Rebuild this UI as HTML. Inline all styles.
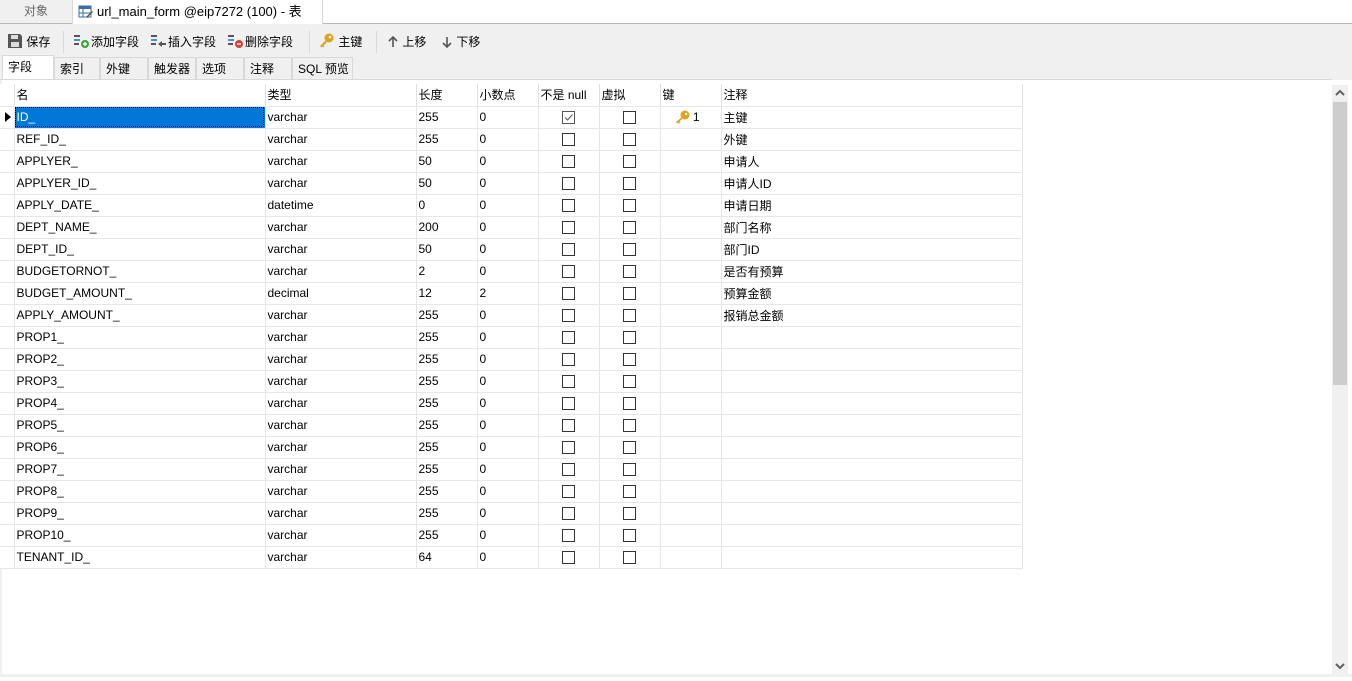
<!DOCTYPE html>
<html><head><meta charset="utf-8">
<style>
*{margin:0;padding:0;box-sizing:border-box}
body{width:1352px;height:681px;overflow:hidden;background:#fff;font-family:"Liberation Sans","Noto Sans CJK SC",sans-serif;font-size:12px;color:#000;position:relative}
.abs{position:absolute}
#top{left:0;top:0;width:1352px;height:24px;background:#fff;border-bottom:1px solid #b8b8b8}
.t1{left:0;top:0;width:72px;height:23px;background:#f0f0f0;color:#666;text-align:center;line-height:23px}
.t2{left:72px;top:0;width:251px;height:24px;background:#fff;border-left:1px solid #d9d9d9;border-right:1px solid #d9d9d9;line-height:23px;padding-left:24px;font-size:13px}
#tb{left:0;top:24px;width:1352px;height:56px;background:#f0f0f0}
.btn{position:absolute;top:33px;height:18px;line-height:18px;font-size:12px}
.sep{position:absolute;top:31px;width:1px;height:22px;background:#d8d8d8}
.stab{position:absolute;top:57px;height:23px;line-height:22px;padding-left:5px;border:1px solid #d9d9d9;border-bottom:none;background:#f0f0f0;font-size:12px}
#grid{position:absolute;left:0;top:79px;width:1332px;height:595px;background:#fff;border-top:1px solid #d9d9d9}
table{position:absolute;left:0;top:84px;border-collapse:collapse;table-layout:fixed}
td{height:22px;border-right:1px solid #e6e6e6;border-bottom:1px solid #e6e6e6;padding-left:2px;white-space:nowrap;overflow:hidden;font-size:12px}
td.m{border-right:1px solid #e6e6e6;padding:0;background:#fff}
tr.h td{border-right:1px solid #e0e0e0}
.cb{display:block;margin:0 auto;width:13px;height:13px;border:1px solid #333;background:#fff}
td.c{padding:0;text-align:center}
.sel{background:#0078d7;color:#fff;outline:1px dotted #000;outline-offset:-2px}
#sb{left:1332px;top:85px;width:16px;height:591px;background:#f0f0f0}
#thumb{left:1333px;top:102px;width:14px;height:283px;background:#cdcdcd}
#bot{left:0;top:674px;width:1352px;height:3px;background:#f0f0f0}
</style></head><body>
<div id="top" class="abs"></div>
<div class="abs t1">对象</div>
<div class="abs t2"><svg class="abs" style="left:5px;top:4px" width="16" height="16" viewBox="0 0 16 16"><rect x="1" y="2" width="12" height="11" fill="#fff" stroke="#3a6ea5"/><rect x="1" y="2" width="12" height="3" fill="#3a6ea5"/><line x1="5" y1="5" x2="5" y2="13" stroke="#3a6ea5"/><line x1="1" y1="9" x2="13" y2="9" stroke="#3a6ea5"/><path d="M9 14 L15 8 L14 7 L8 13 Z" fill="#555"/></svg>url_main_form @eip7272 (100) - 表</div>
<div id="tb" class="abs"></div>
<div class="btn" style="left:7px"><svg style="vertical-align:-3px" width="16" height="16" viewBox="0 0 16 16"><path d="M1 1h12l2 2v12H1z" fill="#555"/><rect x="4" y="2" width="7" height="4" fill="#ddd"/><rect x="4" y="9" width="8" height="5" fill="#ddd"/></svg> 保存</div>
<div class="sep" style="left:63px"></div>
<div class="btn" style="left:73px"><svg style="vertical-align:-3px" width="18" height="16" viewBox="0 0 18 16"><rect x="1" y="2" width="6" height="2" fill="#555"/><rect x="1" y="6" width="6" height="2" fill="#4a90d9"/><rect x="1" y="10" width="5" height="2" fill="#555"/><circle cx="12" cy="11" r="4" fill="#3aa53a"/><path d="M10 11h4M12 9v4" stroke="#fff" stroke-width="1.5"/></svg>添加字段</div>
<div class="btn" style="left:150px"><svg style="vertical-align:-3px" width="18" height="16" viewBox="0 0 18 16"><rect x="1" y="2" width="6" height="2" fill="#555"/><rect x="1" y="6" width="6" height="2" fill="#4a90d9"/><rect x="1" y="10" width="5" height="2" fill="#555"/><path d="M8 11l4-3v2h4v2h-4v2z" fill="#555"/></svg>插入字段</div>
<div class="btn" style="left:227px"><svg style="vertical-align:-3px" width="18" height="16" viewBox="0 0 18 16"><rect x="1" y="2" width="6" height="2" fill="#555"/><rect x="1" y="6" width="6" height="2" fill="#4a90d9"/><rect x="1" y="10" width="5" height="2" fill="#555"/><circle cx="12" cy="11" r="4" fill="#e03c31"/><path d="M10 11h4" stroke="#fff" stroke-width="1.5"/></svg>删除字段</div>
<div class="sep" style="left:309px"></div>
<div class="btn" style="left:319px"><svg style="vertical-align:-3px" width="16" height="16" viewBox="0 0 16 16"><circle cx="10" cy="5" r="4.5" fill="#e5a11a"/><circle cx="11" cy="4" r="1.3" fill="#fff"/><path d="M7 7L1 13l1.5 1.5 1-1 1 1 1-1-1-1 3-3z" fill="#e5a11a"/></svg> 主键</div>
<div class="sep" style="left:376px"></div>
<div class="btn" style="left:387px"><svg style="vertical-align:-2px" width="12" height="12" viewBox="0 0 12 12"><path d="M6 1v10M2 5l4-4 4 4" stroke="#555" stroke-width="1.6" fill="none"/></svg> 上移</div>
<div class="btn" style="left:441px"><svg style="vertical-align:-2px" width="12" height="12" viewBox="0 0 12 12"><path d="M6 1v10M2 7l4 4 4-4" stroke="#555" stroke-width="1.6" fill="none"/></svg> 下移</div>
<div class="stab" style="left:2px;width:52px;background:#fff;height:24px;top:55px">字段</div>
<div class="stab" style="left:54px;width:46px">索引</div>
<div class="stab" style="left:100px;width:48px">外键</div>
<div class="stab" style="left:148px;width:48px">触发器</div>
<div class="stab" style="left:196px;width:48px">选项</div>
<div class="stab" style="left:244px;width:48px">注释</div>
<div class="stab" style="left:292px;width:61px">SQL 预览</div>
<div id="grid"></div>
<div class="abs" style="left:0;top:80px;width:2px;height:594px;background:#f0f0f0"></div>
<table>
<colgroup><col style="width:14px"><col style="width:251px"><col style="width:151px"><col style="width:61px"><col style="width:61px"><col style="width:61px"><col style="width:61px"><col style="width:61px"><col style="width:301px"></colgroup>
<tr class="h"><td class="m"></td><td>名</td><td>类型</td><td>长度</td><td>小数点</td><td>不是 null</td><td>虚拟</td><td>键</td><td>注释</td></tr>
<tr><td class="m"><svg width="8" height="12" viewBox="0 0 8 12" style="display:block;margin-left:4px"><path d="M1 1l6 5-6 5z" fill="#000"/></svg></td><td class="sel">ID_</td><td>varchar</td><td>255</td><td>0</td><td class="c"><span class="cb" style="border-color:#555;position:relative"><svg width="11" height="11" viewBox="0 0 11 11" style="position:absolute;left:0;top:0"><path d="M2 5.5l2.5 2.5 5-5.5" stroke="#555" stroke-width="1" fill="none"/></svg></span></td><td class="c"><span class="cb"></span></td><td style="padding-left:13px"><svg width="16" height="14" viewBox="0 0 16 14" style="vertical-align:-3px"><circle cx="11" cy="5" r="4.5" fill="#e5a11a"/><circle cx="12" cy="4" r="1.2" fill="#fff"/><path d="M8 7L2 12l1.5 1.5 1-1 1 1 1-1-1-1 3-3z" fill="#e5a11a"/></svg> 1</td><td>主键</td></tr>
<tr><td class="m"></td><td>REF_ID_</td><td>varchar</td><td>255</td><td>0</td><td class="c"><span class="cb"></span></td><td class="c"><span class="cb"></span></td><td></td><td>外键</td></tr>
<tr><td class="m"></td><td>APPLYER_</td><td>varchar</td><td>50</td><td>0</td><td class="c"><span class="cb"></span></td><td class="c"><span class="cb"></span></td><td></td><td>申请人</td></tr>
<tr><td class="m"></td><td>APPLYER_ID_</td><td>varchar</td><td>50</td><td>0</td><td class="c"><span class="cb"></span></td><td class="c"><span class="cb"></span></td><td></td><td>申请人ID</td></tr>
<tr><td class="m"></td><td>APPLY_DATE_</td><td>datetime</td><td>0</td><td>0</td><td class="c"><span class="cb"></span></td><td class="c"><span class="cb"></span></td><td></td><td>申请日期</td></tr>
<tr><td class="m"></td><td>DEPT_NAME_</td><td>varchar</td><td>200</td><td>0</td><td class="c"><span class="cb"></span></td><td class="c"><span class="cb"></span></td><td></td><td>部门名称</td></tr>
<tr><td class="m"></td><td>DEPT_ID_</td><td>varchar</td><td>50</td><td>0</td><td class="c"><span class="cb"></span></td><td class="c"><span class="cb"></span></td><td></td><td>部门ID</td></tr>
<tr><td class="m"></td><td>BUDGETORNOT_</td><td>varchar</td><td>2</td><td>0</td><td class="c"><span class="cb"></span></td><td class="c"><span class="cb"></span></td><td></td><td>是否有预算</td></tr>
<tr><td class="m"></td><td>BUDGET_AMOUNT_</td><td>decimal</td><td>12</td><td>2</td><td class="c"><span class="cb"></span></td><td class="c"><span class="cb"></span></td><td></td><td>预算金额</td></tr>
<tr><td class="m"></td><td>APPLY_AMOUNT_</td><td>varchar</td><td>255</td><td>0</td><td class="c"><span class="cb"></span></td><td class="c"><span class="cb"></span></td><td></td><td>报销总金额</td></tr>
<tr><td class="m"></td><td>PROP1_</td><td>varchar</td><td>255</td><td>0</td><td class="c"><span class="cb"></span></td><td class="c"><span class="cb"></span></td><td></td><td></td></tr>
<tr><td class="m"></td><td>PROP2_</td><td>varchar</td><td>255</td><td>0</td><td class="c"><span class="cb"></span></td><td class="c"><span class="cb"></span></td><td></td><td></td></tr>
<tr><td class="m"></td><td>PROP3_</td><td>varchar</td><td>255</td><td>0</td><td class="c"><span class="cb"></span></td><td class="c"><span class="cb"></span></td><td></td><td></td></tr>
<tr><td class="m"></td><td>PROP4_</td><td>varchar</td><td>255</td><td>0</td><td class="c"><span class="cb"></span></td><td class="c"><span class="cb"></span></td><td></td><td></td></tr>
<tr><td class="m"></td><td>PROP5_</td><td>varchar</td><td>255</td><td>0</td><td class="c"><span class="cb"></span></td><td class="c"><span class="cb"></span></td><td></td><td></td></tr>
<tr><td class="m"></td><td>PROP6_</td><td>varchar</td><td>255</td><td>0</td><td class="c"><span class="cb"></span></td><td class="c"><span class="cb"></span></td><td></td><td></td></tr>
<tr><td class="m"></td><td>PROP7_</td><td>varchar</td><td>255</td><td>0</td><td class="c"><span class="cb"></span></td><td class="c"><span class="cb"></span></td><td></td><td></td></tr>
<tr><td class="m"></td><td>PROP8_</td><td>varchar</td><td>255</td><td>0</td><td class="c"><span class="cb"></span></td><td class="c"><span class="cb"></span></td><td></td><td></td></tr>
<tr><td class="m"></td><td>PROP9_</td><td>varchar</td><td>255</td><td>0</td><td class="c"><span class="cb"></span></td><td class="c"><span class="cb"></span></td><td></td><td></td></tr>
<tr><td class="m"></td><td>PROP10_</td><td>varchar</td><td>255</td><td>0</td><td class="c"><span class="cb"></span></td><td class="c"><span class="cb"></span></td><td></td><td></td></tr>
<tr><td class="m"></td><td>TENANT_ID_</td><td>varchar</td><td>64</td><td>0</td><td class="c"><span class="cb"></span></td><td class="c"><span class="cb"></span></td><td></td><td></td></tr>
</table>
<div id="sb" class="abs"></div>
<div id="thumb" class="abs"></div>
<svg class="abs" style="left:1335px;top:89px" width="10" height="8" viewBox="0 0 10 8"><path d="M1 6l4-4 4 4" stroke="#606060" stroke-width="2" fill="none"/></svg>
<svg class="abs" style="left:1335px;top:662px" width="10" height="8" viewBox="0 0 10 8"><path d="M1 2l4 4 4-4" stroke="#606060" stroke-width="2" fill="none"/></svg>
<div id="bot" class="abs"></div>
</body></html>
